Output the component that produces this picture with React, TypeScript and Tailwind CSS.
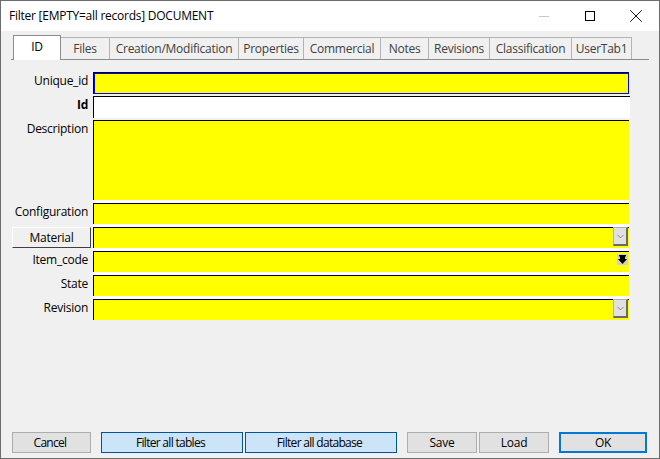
import { ChevronDown, X } from 'lucide-react'

const tabs = [
  { label: 'Files', w: 'w-[49px]' },
  { label: 'Creation/Modification', w: 'w-[129px]' },
  { label: 'Properties', w: 'w-[65px]' },
  { label: 'Commercial', w: 'w-[77px]' },
  { label: 'Notes', w: 'w-[48px]' },
  { label: 'Revisions', w: 'w-[61px]' },
  { label: 'Classification', w: 'w-[82px]' },
  { label: 'UserTab1', w: 'w-[60px]' },
]

function Label({ children, bold }: { children: string; bold?: boolean }) {
  return (
    <div className={`w-[76px] mr-[5px] text-right shrink-0 leading-[16px] pt-[1px] ${bold ? 'font-bold' : ''}`}>
      {children}
    </div>
  )
}

function DropArrow() {
  return (
    <div className="absolute right-[1px] -top-[1px] w-[15px] h-[19px] bg-[#e1e1e1] border border-[#b0b0b0] border-r-2 border-b-2 border-r-[#696969] border-b-[#696969] flex items-center justify-center">
      <ChevronDown className="w-[11px] h-[11px] text-[#606060]" strokeWidth={1.5} />
    </div>
  )
}

function Btn({ label, w, kind = 'plain', tight }: { label: string; w: string; kind?: 'plain' | 'blue' | 'ok'; tight?: boolean }) {
  const look =
    kind === 'blue'
      ? 'bg-[#cce4f7] border border-[#005499]'
      : kind === 'ok'
        ? 'bg-[#e1e1e1] border-2 border-[#0078d7]'
        : 'bg-[#e1e1e1] border border-[#adadad]'
  return (
    <div className={`${w} h-[21px] flex items-center justify-center ${look} ${tight ? 'tracking-[-0.7px] pr-[3px]' : ''}`}>
      {label}
    </div>
  )
}

const box = 'w-[536px] h-[21px] bg-[#ffff00] border-t border-l border-black'

export default function App() {
  return (
    <div className="w-[660px] h-[459px] flex flex-col bg-[#f0f0f0] border border-t-0 border-[#6d6d6d] text-[12px] text-black overflow-hidden font-['Open_Sans','Noto_Sans',sans-serif] tracking-[-0.25px]">
      {/* Title bar */}
      <div className="h-[31px] bg-white flex items-center shrink-0 border-t border-[#6d6d6d]">
        <div className="pl-[8px] flex-1 whitespace-nowrap">Filter [EMPTY=all records] DOCUMENT</div>
        <div className="w-[46px] flex justify-center">
          <div className="w-[10px] h-[1px] bg-[#c8c8c8]" />
        </div>
        <div className="w-[46px] flex justify-center">
          <div className="w-[10px] h-[10px] border border-black" />
        </div>
        <div className="w-[46px] flex justify-center">
          <X className="w-[22px] h-[22px]" strokeWidth={1} />
        </div>
      </div>

      {/* Tabs */}
      <div className="mt-[4px] ml-[10px] mr-[10px] h-[25px] flex items-end border-b border-[#8c8c8c] shrink-0">
        <div className="w-[48px] h-[25px] ml-[2px] -mb-[1px] bg-white border border-b-0 border-[#8c8c8c] flex items-center justify-center relative z-10 pb-[2px]">
          ID
        </div>
        {tabs.map((t) => (
          <div
            key={t.label}
            className={`${t.w} h-[22px] bg-[#f0f0f0] border-t border-r border-[#b4b4b4] flex items-center justify-center text-[#404040] whitespace-nowrap shrink-0`}
          >
            {t.label}
          </div>
        ))}
      </div>

      {/* Form */}
      <div className="mt-[12px] pl-[11px] flex flex-col shrink-0">
        <div className="flex">
          <Label>Unique_id</Label>
          <div className="w-[536px] h-[22px] border-t border-l border-black">
            <div className="h-full bg-[#ffff00] border border-[#0000ff]" />
          </div>
        </div>
        <div className="flex mt-[2px]">
          <Label bold>Id</Label>
          <div className="w-[537px] h-[22px] bg-white border-t border-l border-black" />
        </div>
        <div className="flex mt-[2px]">
          <Label>Description</Label>
          <div className="pb-[3px] bg-white">
            <div className="w-[536px] h-[80px] bg-[#ffff00] border-t border-l border-black" />
          </div>
        </div>
        <div className="flex">
          <Label>Configuration</Label>
          <div className="pb-[3px] bg-white">
            <div className={box} />
          </div>
        </div>
        <div className="flex">
          <div className="w-[79px] h-[21px] mr-[2px] bg-[#f0f0f0] border border-white border-r-[#404040] border-b-[#404040] flex items-center justify-center shrink-0">
            Material
          </div>
          <div className="pb-[3px] bg-white">
            <div className={`${box} relative`}>
              <DropArrow />
            </div>
          </div>
        </div>
        <div className="flex">
          <Label>Item_code</Label>
          <div className="pb-[3px] bg-white">
            <div className={`${box} relative`}>
              <div className="absolute right-[1px] top-[2px] w-[11px] h-[11px] bg-[#d0d0d0] flex items-center justify-center">
                <svg viewBox="0 0 9 9" className="w-[9px] h-[9px]">
                  <path d="M1 0H8V1.5H7V4H9L4.5 9L0 4H2V1.5H1Z" fill="black" />
                </svg>
              </div>
            </div>
          </div>
        </div>
        <div className="flex">
          <Label>State</Label>
          <div className="pb-[3px] bg-white">
            <div className={box} />
          </div>
        </div>
        <div className="flex">
          <Label>Revision</Label>
          <div className={`${box} relative`}>
            <DropArrow />
          </div>
        </div>
      </div>

      {/* Bottom buttons */}
      <div className="mt-auto mb-[5px] pl-[11px] flex shrink-0">
        <Btn label="Cancel" w="w-[79px]" tight />
        <div className="w-[10px]" />
        <Btn label="Filter all tables" w="w-[142px]" kind="blue" tight />
        <div className="w-[2px]" />
        <Btn label="Filter all database" w="w-[152px]" kind="blue" tight />
        <div className="w-[10px]" />
        <Btn label="Save" w="w-[70px]" />
        <div className="w-[2px]" />
        <Btn label="Load" w="w-[70px]" />
        <div className="w-[10px]" />
        <Btn label="OK" w="w-[88px]" kind="ok" />
      </div>
    </div>
  )
}
